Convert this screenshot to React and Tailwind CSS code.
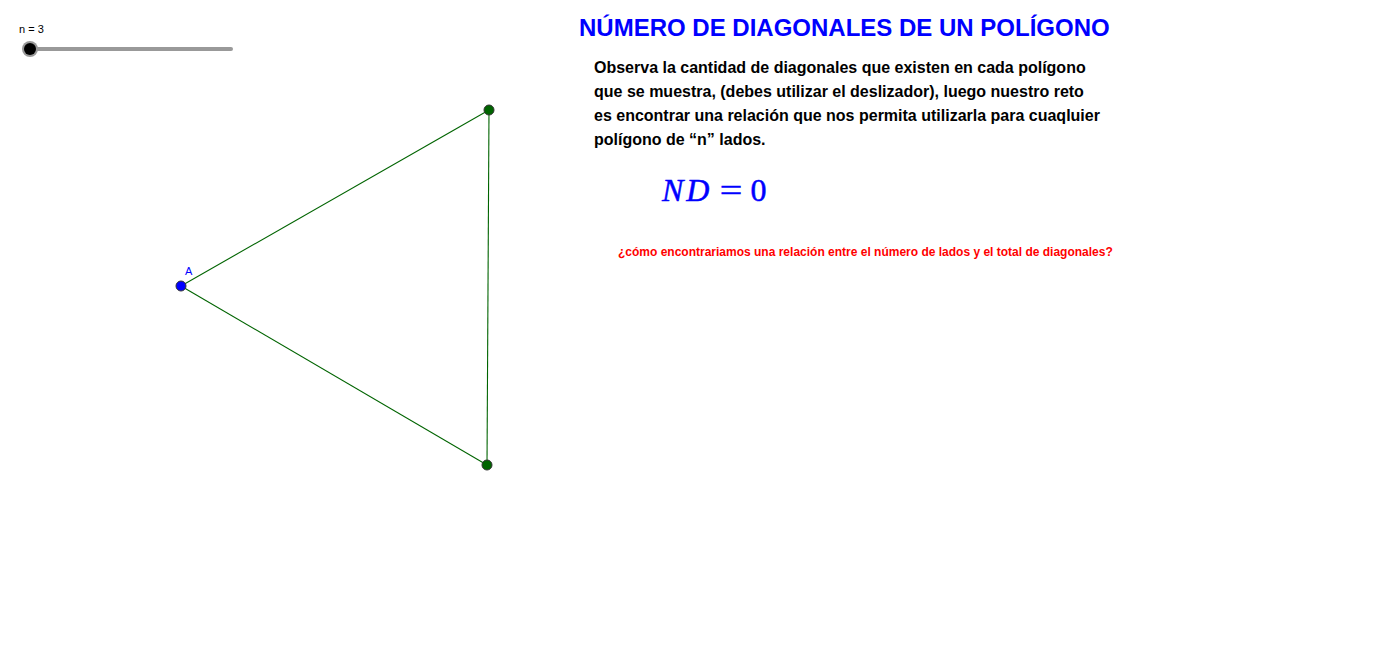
export default function App() {
  const lines = [
    'Observa la cantidad de diagonales que existen en cada polígono',
    'que se muestra, (debes utilizar el deslizador), luego nuestro reto',
    'es encontrar una relación que nos permita utilizarla para cuaqluier',
    'polígono de “n” lados.',
  ]

  return (
    <div className="flex w-[1382px] h-[647px] bg-white overflow-hidden font-['Liberation_Sans',Arial,sans-serif]">
      {/* geometry canvas: slider + triangle */}
      <svg className="shrink-0" width="579" height="647" fontFamily="'Liberation Sans', Arial, sans-serif">
        <text x="19" y="33" fontSize="11" fill="#000">n = 3</text>
        <line x1="30" y1="49" x2="231" y2="49" stroke="#999" strokeWidth="4" strokeLinecap="round" />
        <circle cx="30" cy="49" r="8" fill="#999" />
        <circle cx="30" cy="49" r="6" fill="#000" />

        <line x1="181" y1="286" x2="489" y2="110" stroke="#006400" strokeWidth="1.1" />
        <line x1="489" y1="110" x2="487" y2="465" stroke="#006400" strokeWidth="1.1" />
        <line x1="487" y1="465" x2="181" y2="286" stroke="#006400" strokeWidth="1.1" />
        <circle cx="489" cy="110" r="5" fill="#006400" stroke="#333" strokeWidth="1" />
        <circle cx="487" cy="465" r="5" fill="#006400" stroke="#333" strokeWidth="1" />
        <circle cx="181" cy="286" r="5" fill="#0000ff" stroke="#333" strokeWidth="1" />
        <text x="185" y="275" fontSize="11" fill="#0000ff">A</text>
      </svg>

      <div className="flex flex-col pt-[13px]">
        <h1 className="text-[24px] leading-[30px] font-bold text-[#0000ff] whitespace-nowrap">
          NÚMERO DE DIAGONALES DE UN POLÍGONO
        </h1>

        <div className="mt-[13px] pl-[15px] text-[16px] leading-[24px] font-bold text-black whitespace-nowrap">
          {lines.map((l) => (
            <p key={l}>{l}</p>
          ))}
        </div>

        <div className="mt-[20px] pl-[83px] flex items-baseline gap-[10px] text-[32px] leading-[36px] text-[#0000ff] whitespace-nowrap font-['Liberation_Serif',serif] [-webkit-text-stroke:0.5px_#0000ff]">
          <span className="italic tracking-[3px]">ND</span>
          <span className="scale-x-125">=</span>
          <span>0</span>
        </div>

        <p className="mt-[37px] pl-[39px] text-[12px] leading-[14px] font-bold text-[#ff0000] whitespace-nowrap">
          ¿cómo encontrariamos una relación entre el número de lados y el total de diagonales?
        </p>
      </div>
    </div>
  )
}
